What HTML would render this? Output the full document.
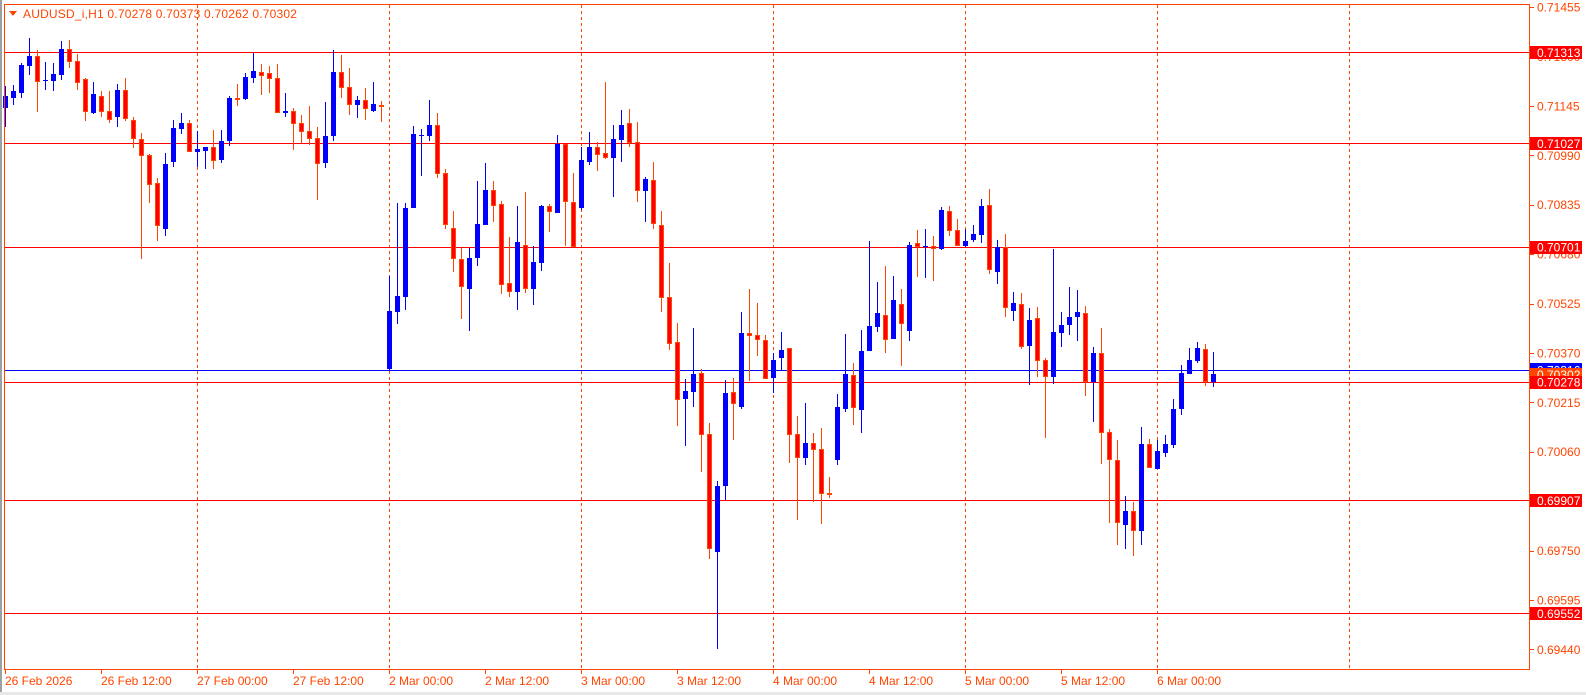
<!DOCTYPE html>
<html><head><meta charset="utf-8"><style>
html,body{margin:0;padding:0;background:#fff;width:1586px;height:695px;overflow:hidden}
svg{display:block}
text{font-family:"Liberation Sans",sans-serif;font-size:12px}
</style></head><body>
<svg id="s" width="1586" height="695" xmlns="http://www.w3.org/2000/svg" shape-rendering="crispEdges">
<rect x="0" y="0" width="1586" height="695" fill="#fff"/>
<rect x="0" y="0" width="2" height="693" fill="#a0a0a0"/>
<rect x="0" y="692" width="1586" height="3" fill="#e8e8e8"/>
<g id="grid"></g>
<g id="hl"></g>
<g id="c"></g>
<rect x="4.5" y="4.5" width="1525" height="665" fill="none" stroke="#ff4500" stroke-width="1"/>
<g id="ax" fill="#ff4500"></g>
<polygon points="9,11 17,11 13,16" fill="#ff4500"/>
<text x="23" y="18" fill="#ff4500" style="letter-spacing:0.2px">AUDUSD_i,H1  0.70278 0.70373 0.70262 0.70302</text>
</svg>
<script>
var NS="http://www.w3.org/2000/svg";
function el(p,t,a,txt){var e=document.createElementNS(NS,t);for(var k in a)e.setAttribute(k,a[k]);if(txt)e.textContent=txt;document.getElementById(p).appendChild(e);return e;}
for(var g=197;g<1529;g+=192){el('grid','line',{x1:g+0.5,y1:5,x2:g+0.5,y2:669,stroke:'#ff4500','stroke-dasharray':'3,3','stroke-width':1});}
[52,143,247,382,500,613].forEach(function(y){el('hl','rect',{x:5,y:y,width:1524,height:1,fill:'#ff0000'});});
el('hl','rect',{x:5,y:370,width:1524,height:1,fill:'#0000ff'});
var D=[[96,108,86,127,1],[91,98,85,105,1],[65,93,63,98,1],[56,66,38,75,1],[56,82,50,112,0],[80,81,62,90,1],[74,81,63,91,1],[49,75,41,80,1],[49,62,40,68,0],[61,83,54,90,0],[79,112,78,121,0],[94,113,82,114,1],[96,112,91,117,0],[111,120,91,123,0],[90,117,84,127,1],[90,119,78,121,0],[120,139,117,148,0],[139,156,133,259,0],[155,185,154,203,0],[183,226,178,241,0],[164,229,153,236,1],[128,162,120,167,1],[123,129,113,134,1],[123,152,120,152,0],[149,152,131,167,1],[147,151,147,169,1],[147,161,130,169,0],[141,160,130,163,1],[98,141,96,146,1],[98,99,84,106,0],[77,99,73,100,1],[71,78,53,83,1],[72,76,64,95,0],[73,79,66,93,0],[78,113,64,113,0],[111,113,93,117,1],[111,124,108,150,0],[123,132,115,143,0],[131,139,106,145,0],[138,164,127,200,0],[136,163,102,168,1],[72,136,50,141,1],[72,88,55,98,0],[87,105,68,115,0],[100,105,96,118,1],[100,109,88,120,0],[104,111,82,112,1],[105,106,101,122,0],
[311,369,276,370,1],[296,312,203,324,1],[208,297,203,310,1],[134,208,126,208,1],[135,136,129,176,1],[125,136,100,141,1],[125,174,113,178,0],[173,225,169,229,0],[228,259,211,272,0],[259,287,248,319,0],[258,289,248,331,1],[224,258,181,266,1],[190,225,163,225,1],[190,206,181,222,0],[204,285,201,294,0],[283,292,237,297,0],[242,292,206,310,1],[245,289,192,293,0],[262,289,246,305,1],[206,263,205,271,1],[206,212,204,232,0],[144,213,135,213,1],[144,202,144,246,0],[202,247,173,247,0],[160,208,147,210,1],[147,162,132,165,1],[147,155,142,171,0],[153,158,82,159,0],[139,158,125,197,1],[125,140,110,162,1],[123,143,109,147,0],[142,191,122,202,0],[179,191,177,222,1],[180,224,162,229,0],[225,298,211,312,0],[297,344,263,350,0],[342,400,323,426,0],
[391,399,379,446,1],[374,392,328,407,1],[373,435,369,472,0],[434,549,423,559,0],[486,552,481,649,1],[393,486,380,500,1],[392,404,378,440,0],[333,407,312,409,1],[333,336,289,381,0],[335,340,303,356,0],[340,379,335,379,0],[360,378,353,393,1],[350,358,332,370,1],[348,435,348,463,0],[434,458,416,520,0],[443,458,403,465,1],[443,450,433,502,0],[449,494,428,524,0],[493,494,477,498,0],[407,460,394,465,1],[374,409,334,412,1],[375,408,363,425,0],[351,410,330,433,1],[326,351,241,351,1],[313,327,282,332,1],[315,340,266,353,0],[300,339,276,339,1],[304,324,289,366,0],[245,331,242,341,1],[243,247,230,277,0],[246,247,229,278,1],[246,249,236,281,0],[210,249,207,250,1],[211,231,206,236,0],[230,246,219,246,0],[241,246,229,247,1],[234,240,225,242,1],[206,235,199,243,1],[205,270,189,274,0],[247,272,240,284,1],[247,308,234,317,0],[303,311,292,321,1],[304,347,293,349,0],[320,346,308,385,1],[318,361,307,377,0],[360,377,358,438,0],[332,377,249,384,1],[325,333,312,347,1],[317,325,287,335,1],[312,317,290,341,1],[313,382,306,396,0],[353,382,347,422,1],[353,433,328,464,0],[432,460,429,523,0],[460,523,440,545,0],[511,525,496,549,1],[511,531,502,556,0],[444,531,427,545,1],[444,468,439,468,0],[451,469,440,469,1],[444,453,435,457,1],[409,445,399,448,1],[373,409,365,415,1],[360,374,348,374,1],[348,361,342,363,1],[349,382,344,386,0],[374,382,352,387,1]];
D.forEach(function(d,i){var cx=5+8*i;var top=d[0],bot=Math.max(d[1],d[0]+1);
 if(d[4]){el('c','rect',{x:cx,y:d[2],width:1,height:d[3]-d[2],fill:'#0000ff'});el('c','rect',{x:cx-2,y:top,width:5,height:bot-top,fill:'#0000ff'});}
 else{el('c','rect',{x:cx,y:d[2],width:1,height:d[3]-d[2],fill:'#ff4500'});el('c','rect',{x:cx-2,y:top,width:5,height:Math.max(bot-top,2),fill:'#ff4500'});if(bot-top>2)el('c','rect',{x:cx-1,y:top+1,width:3,height:bot-top-2,fill:'#ff0000'});}
});
var pl=['0.71455','0.71300','0.71145','0.70990','0.70835','0.70680','0.70525','0.70370','0.70215','0.70060','0.69905','0.69750','0.69595','0.69440'];
pl.forEach(function(t,i){var y=7.1+49.4*i;el('ax','rect',{x:1530,y:Math.round(y),width:4,height:1});el('ax','text',{x:1537,y:y+4.5},t);});
var tl=['26 Feb 2026','26 Feb 12:00','27 Feb 00:00','27 Feb 12:00','2 Mar 00:00','2 Mar 12:00','3 Mar 00:00','3 Mar 12:00','4 Mar 00:00','4 Mar 12:00','5 Mar 00:00','5 Mar 12:00','6 Mar 00:00'];
tl.forEach(function(t,i){var x=5+96*i;el('ax','rect',{x:x,y:670,width:1,height:4});el('ax','text',{x:x,y:685},t);});
function box(y,t,c){el('ax','rect',{x:1530,y:Math.round(y-6.5),width:52,height:13,fill:c});el('ax','text',{x:1537,y:y+4.5,fill:'#fff'},t);}
box(52.3,'0.71313','#ff0000');box(143.4,'0.71027','#ff0000');box(247.2,'0.70701','#ff0000');
box(369.9,'0.70316','#0000ff');box(374.4,'0.70302','#ff4500');box(382,'0.70278','#ff0000');
box(500.3,'0.69907','#ff0000');box(613.4,'0.69552','#ff0000');
</script>
</body></html>
